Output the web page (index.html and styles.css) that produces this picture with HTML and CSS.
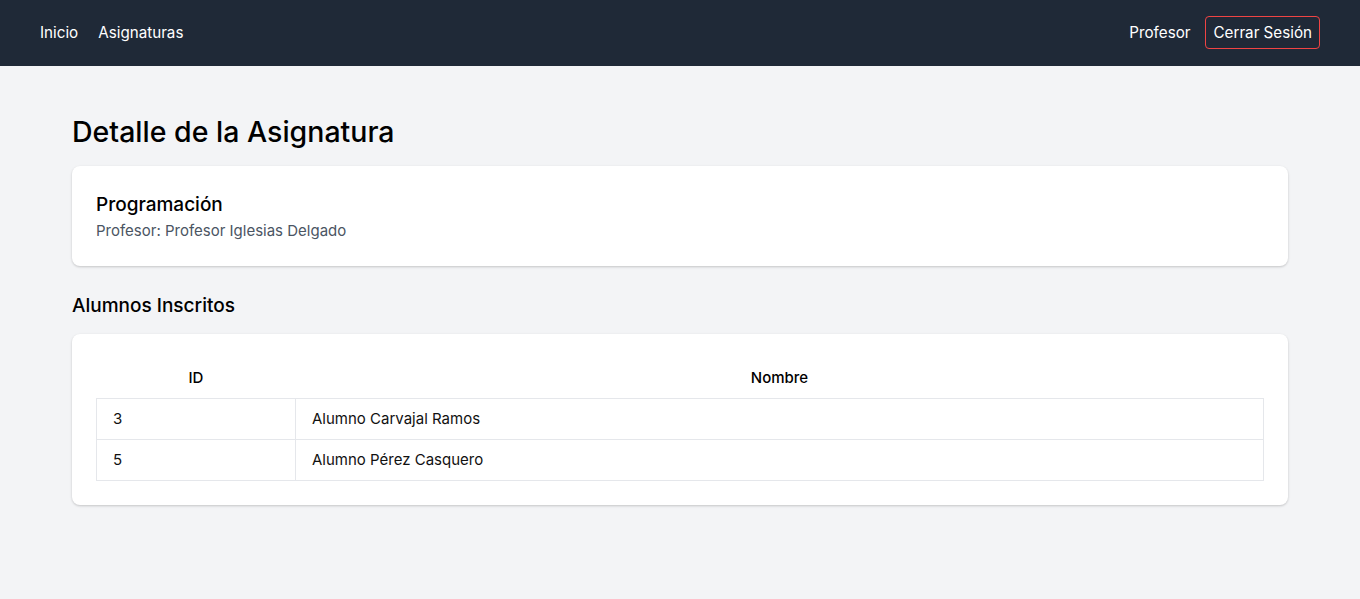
FILE: index.html
```html
<!DOCTYPE html>
<html lang="es">
<head>
<meta charset="utf-8">
<title>Detalle de la Asignatura</title>
<link rel="stylesheet" href="styles.css">
</head>
<body>
<nav class="navbar">
  <div class="nav-left">
    <a class="nav-link" href="#">Inicio</a>
    <a class="nav-link" href="#">Asignaturas</a>
  </div>
  <div class="nav-right">
    <span class="nav-link">Profesor</span>
    <button class="logout">Cerrar Sesión</button>
  </div>
</nav>
<main class="container">
  <h1 class="page-title">Detalle de la Asignatura</h1>
  <section class="card info-card">
    <h2 class="subject">Programación</h2>
    <p class="teacher">Profesor: Profesor Iglesias Delgado</p>
  </section>
  <h3 class="section-title">Alumnos Inscritos</h3>
  <section class="card table-card">
    <table class="students">
      <thead>
        <tr><th class="col-id">ID</th><th>Nombre</th></tr>
      </thead>
      <tbody>
        <tr><td>3</td><td>Alumno Carvajal Ramos</td></tr>
        <tr><td>5</td><td>Alumno Pérez Casquero</td></tr>
      </tbody>
    </table>
  </section>
</main>
</body>
</html>
```
FILE: styles.css
```css
* { box-sizing: border-box; }
html, body { margin: 0; padding: 0; }
body {
  font-family: "Inter", "Noto Sans", sans-serif;
  background: #f3f4f6;
  color: #111827;
}
.navbar {
  height: 66px;
  background: #1f2937;
  display: flex;
  align-items: center;
  justify-content: space-between;
  padding: 0 40px 1px;
}
.nav-left, .nav-right {
  display: flex;
  align-items: center;
  gap: 20px;
}
.nav-right { gap: 15px; }
.nav-link {
  color: #ffffff;
  text-decoration: none;
  font-size: 15.2px;
}
.logout {
  font-family: inherit;
  font-size: 15.2px;
  color: #ffffff;
  background: transparent;
  border: 1px solid #ef4444;
  border-radius: 4px;
  height: 33px;
  padding: 0 7px;
}
.container {
  padding: 48px 72px;
}
.page-title {
  margin: 0 0 16px;
  font-size: 28.5px;
  font-weight: 500;
  line-height: 36px;
  color: #000;
}
.card {
  background: #fff;
  border-radius: 8px;
  box-shadow: 0 1px 3px rgba(0,0,0,0.12), 0 1px 2px rgba(0,0,0,0.08);
  padding: 24px;
}
.info-card { height: 100px; padding-top: 27px; }
.subject {
  margin: 0;
  font-size: 19px;
  font-weight: 500;
  line-height: 24px;
  color: #000;
}
.teacher {
  margin: 4px 0 0;
  font-size: 15px;
  color: #4b5563;
  line-height: 20px;
}
.section-title {
  margin: 28px 0 16px;
  font-size: 19px;
  font-weight: 500;
  line-height: 24px;
  color: #000;
}
.students {
  width: 100%;
  border-collapse: collapse;
  font-size: 15px;
}
.students th {
  height: 40px;
  font-weight: 500;
  text-align: center;
  color: #000;
  padding: 0;
}
.students .col-id { width: 199px; }
.students td {
  height: 41px;
  border: 1px solid #e5e7eb;
  padding: 0 16px;
  color: #111;
}
```
